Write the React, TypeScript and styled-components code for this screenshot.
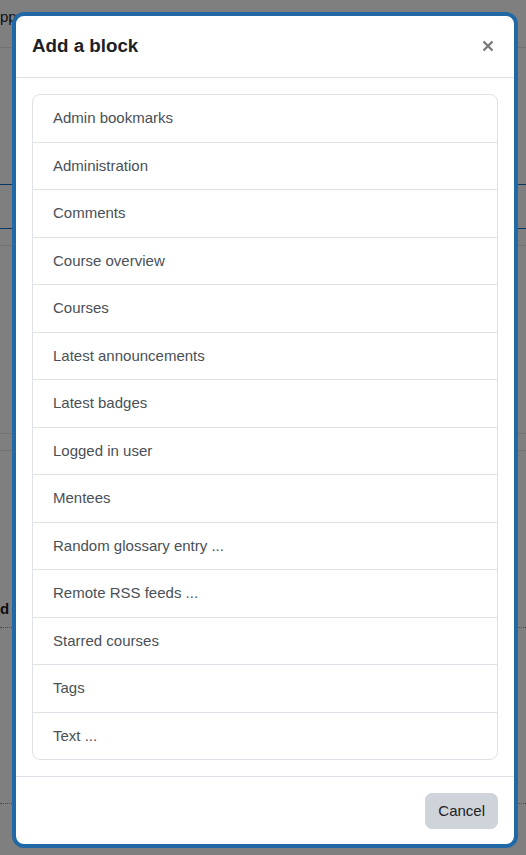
import React from "react";
import styled, { createGlobalStyle } from "styled-components";

const Global = createGlobalStyle`
  html, body { margin: 0; padding: 0; }
  body {
    width: 526px;
    height: 855px;
    overflow: hidden;
    font-family: "Liberation Sans", Arial, sans-serif;
    background: #fff;
  }
  * { box-sizing: border-box; }
`;

const Page = styled.div`
  position: relative;
  width: 526px;
  height: 855px;
  overflow: hidden;
  background: #fff;
`;

const BgText = styled.div<{ $top: number; $bold?: boolean }>`
  padding-top: ${(p) => p.$top}px;
  font-size: 15px;
  line-height: 20px;
  color: #1d2125;
  font-weight: ${(p) => (p.$bold ? 700 : 400)};
`;

const BgRule = styled.div<{ $gap: number; $color?: string; $dotted?: boolean }>`
  margin-top: ${(p) => p.$gap}px;
  border-top: 1px ${(p) => (p.$dotted ? "dotted" : "solid")} ${(p) => p.$color || "#dee2e6"};
`;

const BgColumn = styled.div`
  display: flex;
  flex-direction: column;
`;

const Backdrop = styled.div`
  position: absolute;
  inset: 0;
  background: rgba(0, 0, 0, 0.5);
`;

const ModalLayer = styled.div`
  position: absolute;
  inset: 0;
  padding: 12px 8px 7px 12px;
  display: flex;
  flex-direction: column;
`;

const Dialog = styled.div`
  flex: 1;
  display: flex;
  flex-direction: column;
  background: #fff;
  border: 4px solid #2169a6;
  border-radius: 12px;
  overflow: hidden;
`;

const Header = styled.div`
  display: flex;
  align-items: center;
  justify-content: space-between;
  padding: 16px 16px 17px 16px;
  border-bottom: 1px solid #dee2e6;
`;

const Title = styled.h5`
  margin: 0;
  font-size: 18.75px;
  line-height: 28px;
  font-weight: 700;
  color: #1d2125;
`;

const Close = styled.button`
  border: 0;
  background: transparent;
  padding: 0;
  margin-right: 3px;
  width: 14px;
  height: 28px;
  display: flex;
  align-items: center;
  justify-content: center;
  cursor: pointer;
`;

const Body = styled.div`
  flex: 1;
  padding: 16px;
`;

const List = styled.ul`
  list-style: none;
  margin: 0;
  padding: 0;
  border: 1px solid #dee2e6;
  border-radius: 8px;
  overflow: hidden;
`;

const Item = styled.li`
  padding: 12px 20px;
  font-size: 15px;
  line-height: 22.5px;
  color: #495057;
  & + & {
    border-top: 1px solid #dee2e6;
  }
`;

const Footer = styled.div`
  display: flex;
  justify-content: flex-end;
  padding: 16px 16px 15px;
  border-top: 1px solid #dee2e6;
`;

const Button = styled.button`
  font-family: "Liberation Sans", Arial, sans-serif;
  font-size: 15px;
  line-height: 22px;
  padding: 6px 12px;
  border: 1px solid #ced4da;
  background: #ced4da;
  color: #1d2125;
  border-radius: 7px;
  cursor: pointer;
`;

const items = [
  "Admin bookmarks",
  "Administration",
  "Comments",
  "Course overview",
  "Courses",
  "Latest announcements",
  "Latest badges",
  "Logged in user",
  "Mentees",
  "Random glossary entry ...",
  "Remote RSS feeds ...",
  "Starred courses",
  "Tags",
  "Text ...",
];

export default function App() {
  return (
    <Page>
      <Global />
      <BgColumn>
        <BgText $top={7}>pp</BgText>
        <BgRule $gap={20} />
        <BgRule $gap={136} $color="#0f6cbf" />
        <BgRule $gap={43} $color="#0f6cbf" />
        <BgRule $gap={16} />
        <BgRule $gap={187} />
        <BgRule $gap={16} />
        <BgText $top={148} $bold>
          d
        </BgText>
        <BgRule $gap={8} $dotted $color="#8f959e" />
        <BgRule $gap={175} $dotted $color="#8f959e" />
      </BgColumn>
      <Backdrop />
      <ModalLayer>
        <Dialog role="dialog" aria-label="Add a block">
          <Header>
            <Title>Add a block</Title>
            <Close aria-label="Close">
              <svg width="12" height="12" viewBox="0 0 12 12">
                <path
                  d="M1.5 1.5 L10.5 10.5 M10.5 1.5 L1.5 10.5"
                  stroke="#7a7a7a"
                  strokeWidth="2.4"
                  strokeLinecap="butt"
                />
              </svg>
            </Close>
          </Header>
          <Body>
            <List>
              {items.map((t) => (
                <Item key={t}>{t}</Item>
              ))}
            </List>
          </Body>
          <Footer>
            <Button>Cancel</Button>
          </Footer>
        </Dialog>
      </ModalLayer>
    </Page>
  );
}
